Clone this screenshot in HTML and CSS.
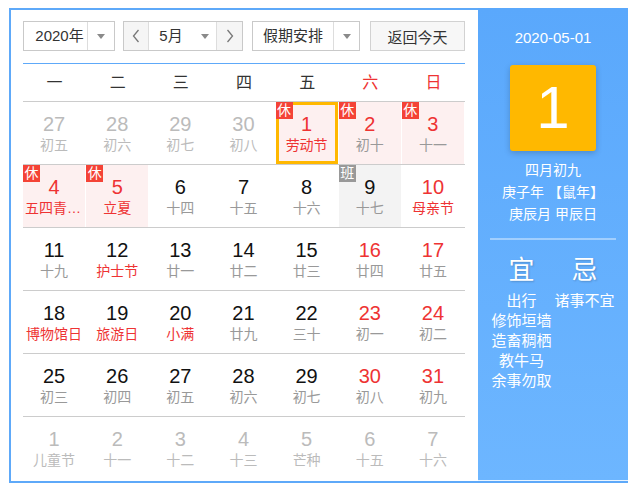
FILE: index.html
```html
<!DOCTYPE html>
<html lang="zh-CN">
<head>
<meta charset="utf-8">
<title>万年历</title>
<link rel="stylesheet" href="styles.css">
</head>
<body>
<div class="cal">
  <div class="main">
    <div class="toolbar">
      <div class="select year"><span class="val">2020年</span><span class="caret-box"><i class="caret"></i></span></div>
      <div class="month-group">
        <span class="nav prev"><svg width="8" height="14" viewBox="0 0 8 14"><polyline points="6.5,1 1.5,7 6.5,13" fill="none" stroke="#777" stroke-width="1.3"/></svg></span>
        <span class="val">5月</span><span class="caret-box plain"><i class="caret"></i></span>
        <span class="nav next"><svg width="8" height="14" viewBox="0 0 8 14"><polyline points="1.5,1 6.5,7 1.5,13" fill="none" stroke="#777" stroke-width="1.3"/></svg></span>
      </div>
      <div class="select holiday"><span class="val">假期安排</span><span class="caret-box"><i class="caret"></i></span></div>
      <button class="today">返回今天</button>
    </div>
    <div class="week">
      <span>一</span><span>二</span><span>三</span><span>四</span><span>五</span><span class="red">六</span><span class="red">日</span>
    </div>
    <div class="days">
      <div class="day other"><div class="in"><b>27</b><em>初五</em></div></div>
      <div class="day other"><div class="in"><b>28</b><em>初六</em></div></div>
      <div class="day other"><div class="in"><b>29</b><em>初七</em></div></div>
      <div class="day other"><div class="in"><b>30</b><em>初八</em></div></div>
      <div class="day rest sel red fest"><div class="in"><i class="tag">休</i><b>1</b><em>劳动节</em></div></div>
      <div class="day rest red"><div class="in"><i class="tag">休</i><b>2</b><em>初十</em></div></div>
      <div class="day rest red"><div class="in"><i class="tag">休</i><b>3</b><em>十一</em></div></div>

      <div class="day rest red fest"><div class="in"><i class="tag">休</i><b>4</b><em>五四青年节</em></div></div>
      <div class="day rest red fest"><div class="in"><i class="tag">休</i><b>5</b><em>立夏</em></div></div>
      <div class="day"><div class="in"><b>6</b><em>十四</em></div></div>
      <div class="day"><div class="in"><b>7</b><em>十五</em></div></div>
      <div class="day"><div class="in"><b>8</b><em>十六</em></div></div>
      <div class="day work"><div class="in"><i class="tag">班</i><b>9</b><em>十七</em></div></div>
      <div class="day red fest"><div class="in"><b>10</b><em>母亲节</em></div></div>

      <div class="day"><div class="in"><b>11</b><em>十九</em></div></div>
      <div class="day fest"><div class="in"><b>12</b><em>护士节</em></div></div>
      <div class="day"><div class="in"><b>13</b><em>廿一</em></div></div>
      <div class="day"><div class="in"><b>14</b><em>廿二</em></div></div>
      <div class="day"><div class="in"><b>15</b><em>廿三</em></div></div>
      <div class="day red"><div class="in"><b>16</b><em>廿四</em></div></div>
      <div class="day red"><div class="in"><b>17</b><em>廿五</em></div></div>

      <div class="day fest"><div class="in"><b>18</b><em>博物馆日</em></div></div>
      <div class="day fest"><div class="in"><b>19</b><em>旅游日</em></div></div>
      <div class="day fest"><div class="in"><b>20</b><em>小满</em></div></div>
      <div class="day"><div class="in"><b>21</b><em>廿九</em></div></div>
      <div class="day"><div class="in"><b>22</b><em>三十</em></div></div>
      <div class="day red"><div class="in"><b>23</b><em>初一</em></div></div>
      <div class="day red"><div class="in"><b>24</b><em>初二</em></div></div>

      <div class="day"><div class="in"><b>25</b><em>初三</em></div></div>
      <div class="day"><div class="in"><b>26</b><em>初四</em></div></div>
      <div class="day"><div class="in"><b>27</b><em>初五</em></div></div>
      <div class="day"><div class="in"><b>28</b><em>初六</em></div></div>
      <div class="day"><div class="in"><b>29</b><em>初七</em></div></div>
      <div class="day red"><div class="in"><b>30</b><em>初八</em></div></div>
      <div class="day red"><div class="in"><b>31</b><em>初九</em></div></div>

      <div class="day other"><div class="in"><b>1</b><em>儿童节</em></div></div>
      <div class="day other"><div class="in"><b>2</b><em>十一</em></div></div>
      <div class="day other"><div class="in"><b>3</b><em>十二</em></div></div>
      <div class="day other"><div class="in"><b>4</b><em>十三</em></div></div>
      <div class="day other"><div class="in"><b>5</b><em>芒种</em></div></div>
      <div class="day other"><div class="in"><b>6</b><em>十五</em></div></div>
      <div class="day other"><div class="in"><b>7</b><em>十六</em></div></div>
    </div>
  </div>
  <div class="side">
    <div class="date">2020-05-01</div>
    <div class="big">1</div>
    <div class="lunar">
      <p>四月初九</p>
      <p>庚子年 【鼠年】</p>
      <p>庚辰月 甲辰日</p>
    </div>
    <div class="sep"></div>
    <div class="yiji">
      <div class="col">
        <h3>宜</h3>
        <p class="first">出行</p>
        <p>修饰垣墙</p>
        <p>造畜稠栖</p>
        <p>教牛马</p>
        <p>余事勿取</p>
      </div>
      <div class="col">
        <h3>忌</h3>
        <p class="first">诸事不宜</p>
      </div>
    </div>
  </div>
</div>
</body>
</html>
```
FILE: styles.css
```css
* { box-sizing: border-box; }
html, body { margin: 0; padding: 0; background: #fff; }
body {
  font-family: "Liberation Sans", "Noto Sans CJK SC", sans-serif;
  color: #333;
}
.cal {
  display: flex;
  margin: 8px 0 0 9px;
}
.main {
  width: 469px;
  height: 475px;
  border: 2px solid #5ea9f9;
  border-right: none;
  padding: 11px 13px 2px 12px;
  background: #fff;
}
.toolbar {
  display: flex;
  height: 30px;
  margin-bottom: 12px;
  font-size: 15px;
}
.select, .month-group {
  display: flex;
  height: 30px;
  border: 1px solid #c9c9c9;
  background: #fff;
}
.val {
  display: flex;
  align-items: center;
  justify-content: center;
  line-height: 28px;
  color: #333;
}
.caret-box {
  display: flex;
  align-items: center;
  justify-content: center;
  border-left: 1px solid #ddd;
}
.caret-box.plain { border-left: none; }
.caret {
  display: block;
  width: 0;
  height: 0;
  border-top: 5px solid #8a8a8a;
  border-left: 4px solid transparent;
  border-right: 4px solid transparent;
}
.year { width: 92px; }
.year .val { width: 63px; padding-left: 8px; }
.year .caret-box { width: 27px; }
.month-group { width: 120px; margin-left: 8px; }
.nav {
  width: 25px;
  display: flex;
  align-items: center;
  justify-content: center;
  background: #f5f5f5;
}
.prev { border-right: 1px solid #ddd; }
.next { border-left: 1px solid #ddd; width: 26px; }
.month-group .val { width: 44px; }
.month-group .caret-box { width: 23px; }
.holiday { width: 108px; margin-left: 9px; }
.holiday .val { width: 80px; }
.holiday .caret-box { width: 26px; }
.today {
  margin-left: auto;
  width: 95px;
  height: 30px;
  border: 1px solid #d2d2d2;
  background: #f7f7f7;
  font: inherit;
  font-size: 15px;
  color: #333;
  padding: 0;
}
.week {
  display: grid;
  grid-template-columns: repeat(7, 1fr);
  border-top: 1px solid #5ea9f9;
  height: 38px;
  line-height: 37px;
  text-align: center;
  font-size: 16px;
  color: #333;
}
.week .red { color: #e33; }
.days {
  display: grid;
  grid-template-columns: repeat(7, 1fr);
  grid-auto-rows: 63px;
}
.day {
  border-top: 1px solid #ccc;
  padding-right: 1px;
  min-width: 0;
}
.day .in {
  position: relative;
  height: 100%;
  padding: 10px 2px 0;
  text-align: center;
}
.day b {
  display: block;
  font-weight: normal;
  font-size: 20px;
  line-height: 24px;
  color: #111;
}
.day em {
  display: block;
  font-style: normal;
  font-size: 14px;
  line-height: 19px;
  color: #999;
  white-space: nowrap;
  overflow: hidden;
  text-overflow: ellipsis;
}
.day.red b { color: #e33; }
.day.fest em { color: #e33; }
.day.other b, .day.other em { color: #bbb; }
.day.rest .in { background: #fdf0f0; }
.day.work .in { background: #f3f3f3; }
.day.sel .in { box-shadow: inset 0 0 0 3px #ffb800; }
.tag {
  position: absolute;
  left: 0;
  top: 0;
  width: 17px;
  height: 17px;
  font-style: normal;
  font-size: 14px;
  line-height: 17px;
  color: #fff;
  background: #f44336;
  text-align: center;
}
.work .tag { background: #999; }
.side {
  width: 150px;
  height: 475px;
  margin-top: 0;
  background: linear-gradient(#5aa8fc, #6db6ff);
  border-bottom: 2px solid #5ea9f9;
  box-shadow: inset 0 -1px 0 rgba(255, 255, 255, 0.85);
  color: #fff;
  text-align: center;
  padding-top: 20px;
}
.date {
  font-size: 15px;
  line-height: 20px;
}
.big {
  width: 86px;
  height: 86px;
  margin: 17px auto 0;
  background: #ffb800;
  border-radius: 3px;
  box-shadow: 0 2px 6px rgba(0, 0, 0, 0.2);
  font-size: 60px;
  line-height: 86px;
  color: #fff;
}
.lunar { margin-top: 8px; font-size: 14px; }
.lunar p { margin: 0; line-height: 22px; }
.sep {
  height: 2px;
  margin: 13px 12px 0;
  background: rgba(255, 255, 255, 0.4);
}
.yiji {
  display: grid;
  grid-template-columns: 1fr 1fr;
  padding: 0 12px;
  margin-top: 15px;
}
.yiji h3 {
  margin: 0 0 6px;
  font-weight: normal;
  font-size: 26px;
  line-height: 30px;
  text-shadow: 1px 1px 2px rgba(0, 0, 0, 0.2);
}
.yiji p {
  margin: 0;
  font-size: 15px;
  line-height: 20px;
  white-space: nowrap;
}
```
